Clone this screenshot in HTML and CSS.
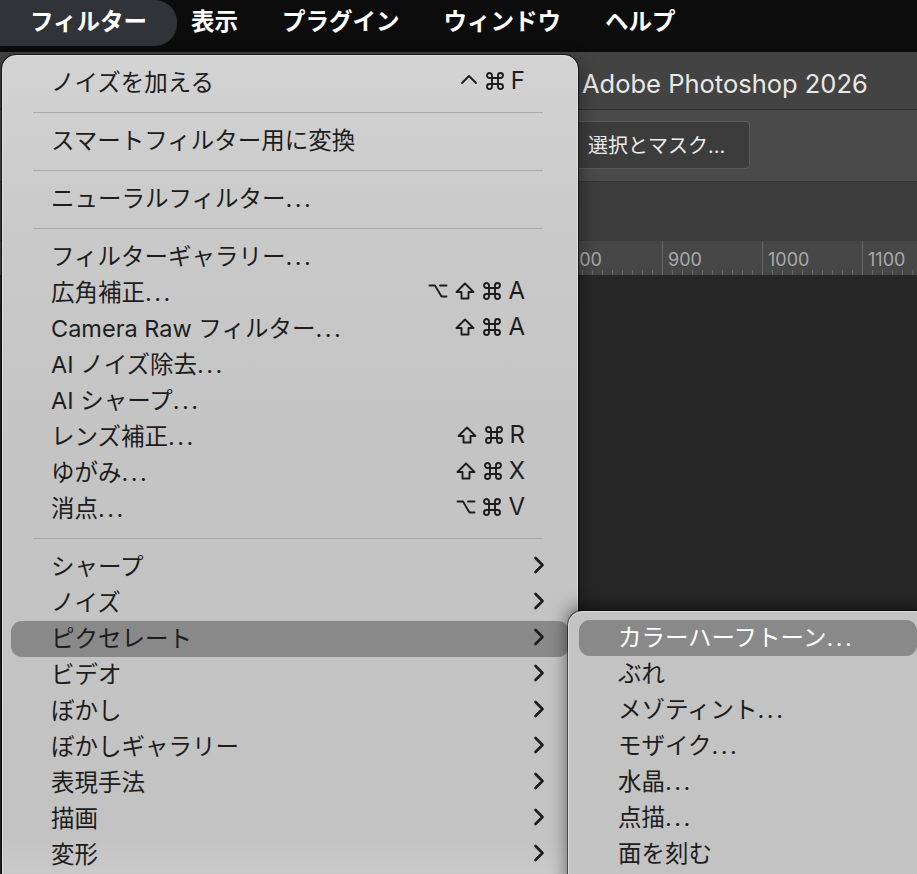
FILE: index.html
```html
<!DOCTYPE html>
<html lang="ja">
<head>
<meta charset="utf-8">
<link rel="stylesheet" href="styles.css">
<title>フィルター</title>
</head>
<body>
<div class="menubar">
  <span class="mb-item active">フィルター</span>
  <span class="mb-item">表示</span>
  <span class="mb-item">プラグイン</span>
  <span class="mb-item">ウィンドウ</span>
  <span class="mb-item">ヘルプ</span>
</div>

<div class="app">
  <div class="titlebar">Adobe Photoshop 2026</div>
  <div class="optbar"><span class="btn-mask">選択とマスク...</span></div>
  <div class="panel"></div>
  <div class="ruler">
    <span class="tick">800</span><span class="tick">900</span><span class="tick">1000</span><span class="tick">1100</span>
  </div>
  <div class="canvas"></div>
</div>

<svg width="0" height="0" style="position:absolute">
  <defs>
    <symbol id="k-ctrl" viewBox="0 0 20 20"><polyline points="3,12 10,5 17,12"/></symbol>
    <symbol id="k-cmd" viewBox="0 0 20 20"><path d="M7 7V4.5A2.5 2.5 0 1 0 4.5 7H15.5A2.5 2.5 0 1 0 13 4.5V15.5A2.5 2.5 0 1 0 15.5 13H4.5A2.5 2.5 0 1 0 7 15.5Z"/></symbol>
    <symbol id="k-shift" viewBox="0 0 22 20"><path d="M11 2.5L19.5 11H14.5V17.5H7.5V11H2.5Z"/></symbol>
    <symbol id="k-opt" viewBox="0 0 20 20"><path d="M1.5 4.5H7L13.5 15.5H18.5M12 4.5H18.5"/></symbol>
    <symbol id="chev" viewBox="0 0 12 18"><polyline points="2.5,2 9.5,9 2.5,16"/></symbol>
  </defs>
</svg>

<div class="menu menu-main">
  <div class="item"><span>ノイズを加える</span><span class="keys"><svg class="k"><use href="#k-ctrl"/></svg><svg class="k"><use href="#k-cmd"/></svg><b>F</b></span></div>
  <div class="sep"></div>
  <div class="item"><span>スマートフィルター用に変換</span></div>
  <div class="sep"></div>
  <div class="item"><span>ニューラルフィルター<em>...</em></span></div>
  <div class="sep"></div>
  <div class="item"><span>フィルターギャラリー<em>...</em></span></div>
  <div class="item"><span>広角補正<em>...</em></span><span class="keys"><svg class="k"><use href="#k-opt"/></svg><svg class="k k-wide"><use href="#k-shift"/></svg><svg class="k"><use href="#k-cmd"/></svg><b>A</b></span></div>
  <div class="item"><span>Camera Raw フィルター<em>...</em></span><span class="keys"><svg class="k k-wide"><use href="#k-shift"/></svg><svg class="k"><use href="#k-cmd"/></svg><b>A</b></span></div>
  <div class="item"><span>AI ノイズ除去<em>...</em></span></div>
  <div class="item"><span>AI シャープ<em>...</em></span></div>
  <div class="item"><span>レンズ補正<em>...</em></span><span class="keys"><svg class="k k-wide"><use href="#k-shift"/></svg><svg class="k"><use href="#k-cmd"/></svg><b>R</b></span></div>
  <div class="item"><span>ゆがみ<em>...</em></span><span class="keys"><svg class="k k-wide"><use href="#k-shift"/></svg><svg class="k"><use href="#k-cmd"/></svg><b>X</b></span></div>
  <div class="item"><span>消点<em>...</em></span><span class="keys"><svg class="k"><use href="#k-opt"/></svg><svg class="k"><use href="#k-cmd"/></svg><b>V</b></span></div>
  <div class="sep"></div>
  <div class="item"><span>シャープ</span><svg class="chev"><use href="#chev"/></svg></div>
  <div class="item"><span>ノイズ</span><svg class="chev"><use href="#chev"/></svg></div>
  <div class="item hl"><span>ピクセレート</span><svg class="chev"><use href="#chev"/></svg></div>
  <div class="item"><span>ビデオ</span><svg class="chev"><use href="#chev"/></svg></div>
  <div class="item"><span>ぼかし</span><svg class="chev"><use href="#chev"/></svg></div>
  <div class="item"><span>ぼかしギャラリー</span><svg class="chev"><use href="#chev"/></svg></div>
  <div class="item"><span>表現手法</span><svg class="chev"><use href="#chev"/></svg></div>
  <div class="item"><span>描画</span><svg class="chev"><use href="#chev"/></svg></div>
  <div class="item"><span>変形</span><svg class="chev"><use href="#chev"/></svg></div>
</div>

<div class="menu menu-sub">
  <div class="item hl"><span>カラーハーフトーン<em>...</em></span></div>
  <div class="item"><span>ぶれ</span></div>
  <div class="item"><span>メゾティント<em>...</em></span></div>
  <div class="item"><span>モザイク<em>...</em></span></div>
  <div class="item"><span>水晶<em>...</em></span></div>
  <div class="item"><span>点描<em>...</em></span></div>
  <div class="item"><span>面を刻む</span></div>
</div>
</body>
</html>
```

FILE: styles.css
```css
*{margin:0;padding:0;box-sizing:border-box;}
html,body{width:917px;height:874px;overflow:hidden;}
body{background:#272727;font-family:Inter,"Noto Sans CJK JP","DejaVu Sans",sans-serif;position:relative;}

/* top menu bar */
.menubar{height:52px;background:#0c0c0d;display:flex;align-items:flex-start;gap:44px;}
.mb-item{height:46px;line-height:44px;font-size:23.5px;font-weight:600;color:#fff;}
.mb-item.active{padding:0 30px;margin-right:-30px;background:#303337;border-radius:0 22px 22px 0;}

/* photoshop behind */
.app{display:flex;flex-direction:column;}
.titlebar{height:58px;background:#434343;border-bottom:1px solid #2e2e2e;color:#e8e8e8;font-size:25.5px;padding:15px 0 0 582px;line-height:34px;}
.optbar{height:72px;background:#4a4a4a;border-bottom:1px solid #333;padding:11px 0 0 575px;}
.btn-mask{display:inline-block;width:175px;height:48px;line-height:49px;padding-left:12px;background:#3c3c3c;border:1px solid #5b5b5b;border-radius:4px;color:#ececec;font-size:20px;}
.btn-mask,.titlebar{white-space:nowrap;}
.panel{height:58px;background:#3d3d3d;}
.ruler{height:35px;background:#474747;display:flex;padding-left:562px;border-top:1px solid #3a3a3a;
  background-image:repeating-linear-gradient(90deg,#686868 0 1px,transparent 1px 10px);
  background-size:100% 5px;background-repeat:no-repeat;background-position:562px 100%;}
.tick{width:100px;flex:none;border-left:1px solid #666;color:#a9a9a9;font-size:18px;line-height:20px;padding:9px 0 0 5px;background:#474747;height:29px;}
.canvas{flex:1;background:#272727;height:600px;}

/* menus */
.menu{position:absolute;color:#1d1d1d;font-size:23.5px;}
.menu-main{left:2px;top:55px;width:576px;height:840px;padding-top:9px;border-radius:14px;
  background:linear-gradient(180deg,#d3d3d3 0,#c9c9c9 180px,#c4c4c4 400px,#c3c3c3 780px,#cdcdcd 840px);
  border:1px solid #dedede;box-shadow:0 0 0 1px rgba(0,0,0,.55),0 6px 20px rgba(0,0,0,.45);}
.menu-sub{left:568px;top:611px;width:360px;height:300px;padding-top:8px;border-radius:14px 0 0 14px;
  background:#c3c3c3;border:1px solid #dcdcdc;box-shadow:0 0 0 1px rgba(0,0,0,.5),0 -4px 18px rgba(0,0,0,.55);}

.item{height:36px;display:flex;align-items:center;margin:0 8px;padding:0 24px 4px 40px;border-radius:11px;}
.item span:first-child{flex:1;white-space:nowrap;}
.item em{font-style:normal;letter-spacing:2.5px;}
.item.hl{background:#898989;}
.menu-sub .item{margin:0 10px;padding-left:39px;}
.menu-sub .item.hl{color:#fff;}
.sep{height:1px;margin:11px 34px 10px 30px;background:#a9a9a9;}

.keys{display:flex;align-items:center;gap:6px;padding-right:20px;}
.keys b{font-weight:400;font-size:24px;font-family:Inter,sans-serif;line-height:1;}
.k{width:20px;height:20px;fill:none;stroke:#1d1d1d;stroke-width:1.9;stroke-linejoin:round;stroke-linecap:round;}
.k-wide{width:22px;}
.chev{width:12px;height:18px;fill:none;stroke:#1d1d1d;stroke-width:2.7;stroke-linecap:round;stroke-linejoin:round;}
```
